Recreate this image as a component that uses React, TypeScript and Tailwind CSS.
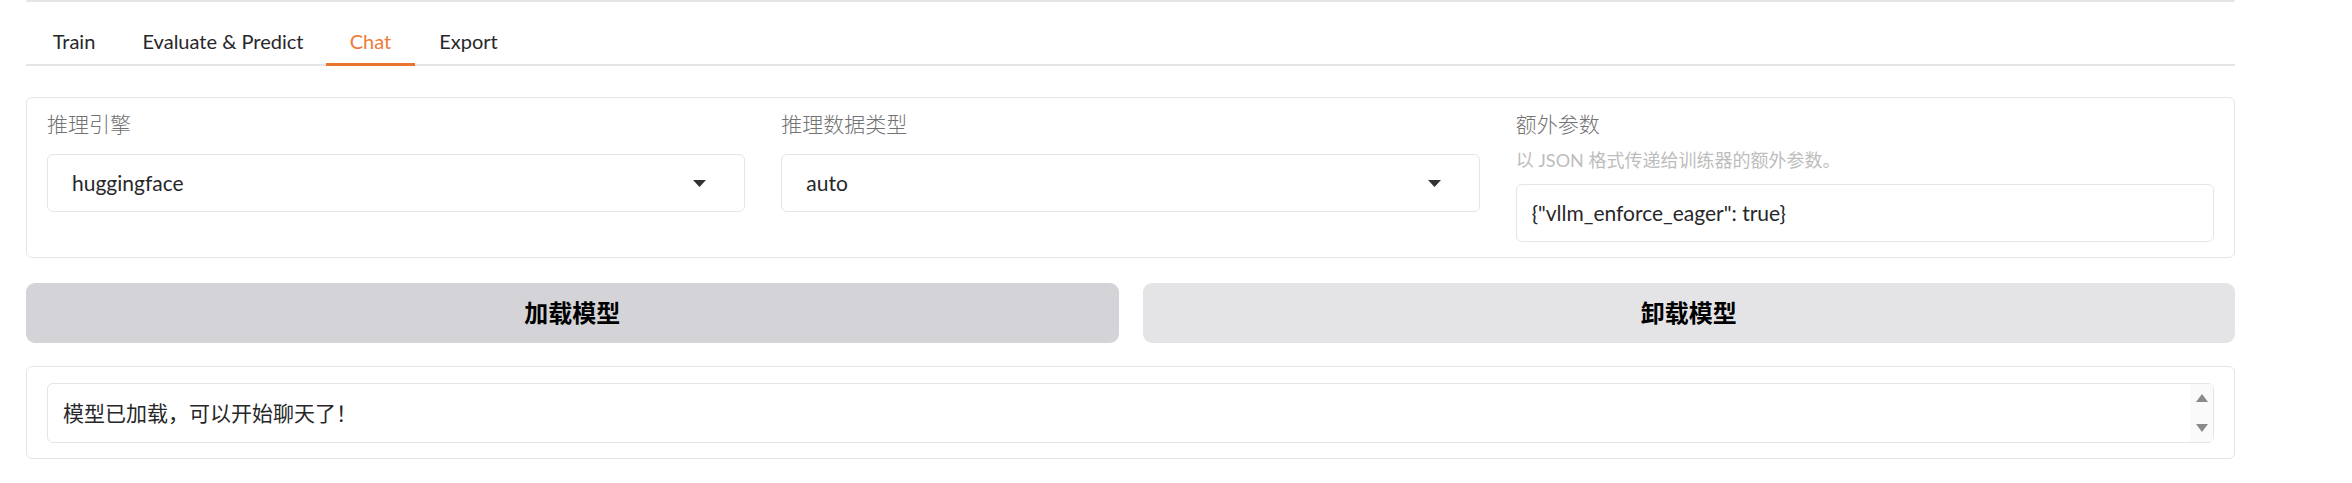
import React from 'react';

const font = { fontFamily: 'Lato, "Noto Sans CJK SC", sans-serif' };

const tabs = [
  { label: 'Train', width: 'w-[92px]' },
  { label: 'Evaluate & Predict', width: 'w-[206px]' },
  { label: 'Chat', width: 'w-[89px]', active: true },
  { label: 'Export', width: 'w-[107px]' },
];

function Caret() {
  return (
    <svg width="13" height="7" viewBox="0 0 13 7" className="shrink-0">
      <polygon points="0,0 13,0 6.5,7" fill="#333333" />
    </svg>
  );
}

function Dropdown({ label, value }: { label: string; value: string }) {
  return (
    <div className="flex flex-col">
      <div className="h-[30px] leading-[30px] text-[21px] font-light text-[#737373]">{label}</div>
      <div className="mt-[15px] h-[58px] rounded-[6px] border border-[#e5e5e5] bg-white flex items-center pl-[24px] pr-[38px]">
        <span className="flex-1 text-[21px] text-[#27272a]">{value}</span>
        <Caret />
      </div>
    </div>
  );
}

export default function App() {
  return (
    <div className="min-h-[483px] w-full bg-white" style={font}>
      <div className="ml-[26px] w-[2209px]">
        <div className="h-[2px] bg-[#e5e5e5] rounded-b" />

        <div className="pt-[17px] flex border-b-2 border-[#e5e5e5]">
          <div className="ml-[2px] flex">
            {tabs.map((t) => (
              <div
                key={t.label}
                className={`relative h-[45px] pb-[2px] flex items-center justify-center text-[20px] ${t.width} ${
                  t.active ? 'text-[#ee7b38]' : 'text-[#27272a]'
                }`}
              >
                {t.label}
                {t.active && <span className="absolute left-0 right-0 -bottom-[2px] h-[3px] bg-[#e8752f]" />}
              </div>
            ))}
          </div>
        </div>

        <div className="mt-[31px] rounded-[6px] border border-[#e5e5e5] pt-[11px] pb-[15px] px-[20px] grid grid-cols-3 gap-x-[36px]">
          <Dropdown label="推理引擎" value="huggingface" />
          <Dropdown label="推理数据类型" value="auto" />
          <div className="flex flex-col">
            <div className="h-[30px] leading-[30px] text-[21px] font-light text-[#737373]">额外参数</div>
            <div className="mt-[9px] h-[24px] leading-[24px] text-[18px] text-[#bdbdbd]">以 JSON 格式传递给训练器的额外参数。</div>
            <div className="mt-[12px] h-[58px] rounded-[6px] border border-[#e5e5e5] flex items-center px-[15px] text-[21px] text-[#27272a]">
              {'{"vllm_enforce_eager": true}'}
            </div>
          </div>
        </div>

        <div className="mt-[25px] grid grid-cols-2 gap-x-[24px]">
          <button className="h-[60px] rounded-[9px] bg-[#d4d4d8] text-[24px] font-bold text-black">加载模型</button>
          <button className="h-[60px] rounded-[9px] bg-[#e4e4e7] text-[24px] font-bold text-black">卸载模型</button>
        </div>

        <div className="mt-[23px] rounded-[6px] border border-[#e5e5e5] pt-[16px] pb-[15px] px-[20px]">
          <div className="h-[60px] rounded-[6px] border border-[#e5e5e5] flex items-stretch">
            <div className="flex-1 flex items-center pl-[15px] text-[21px] text-[#27272a]">模型已加载，可以开始聊天了！</div>
            <div className="w-[23px] bg-[#fafafa] flex flex-col items-center justify-between pt-[10px] pb-[10px]">
              <svg width="12" height="8" viewBox="0 0 12 8">
                <polygon points="6,0 12,8 0,8" fill="#8a8a8a" />
              </svg>
              <svg width="12" height="8" viewBox="0 0 12 8">
                <polygon points="0,0 12,0 6,8" fill="#8a8a8a" />
              </svg>
            </div>
          </div>
        </div>
      </div>
    </div>
  );
}
